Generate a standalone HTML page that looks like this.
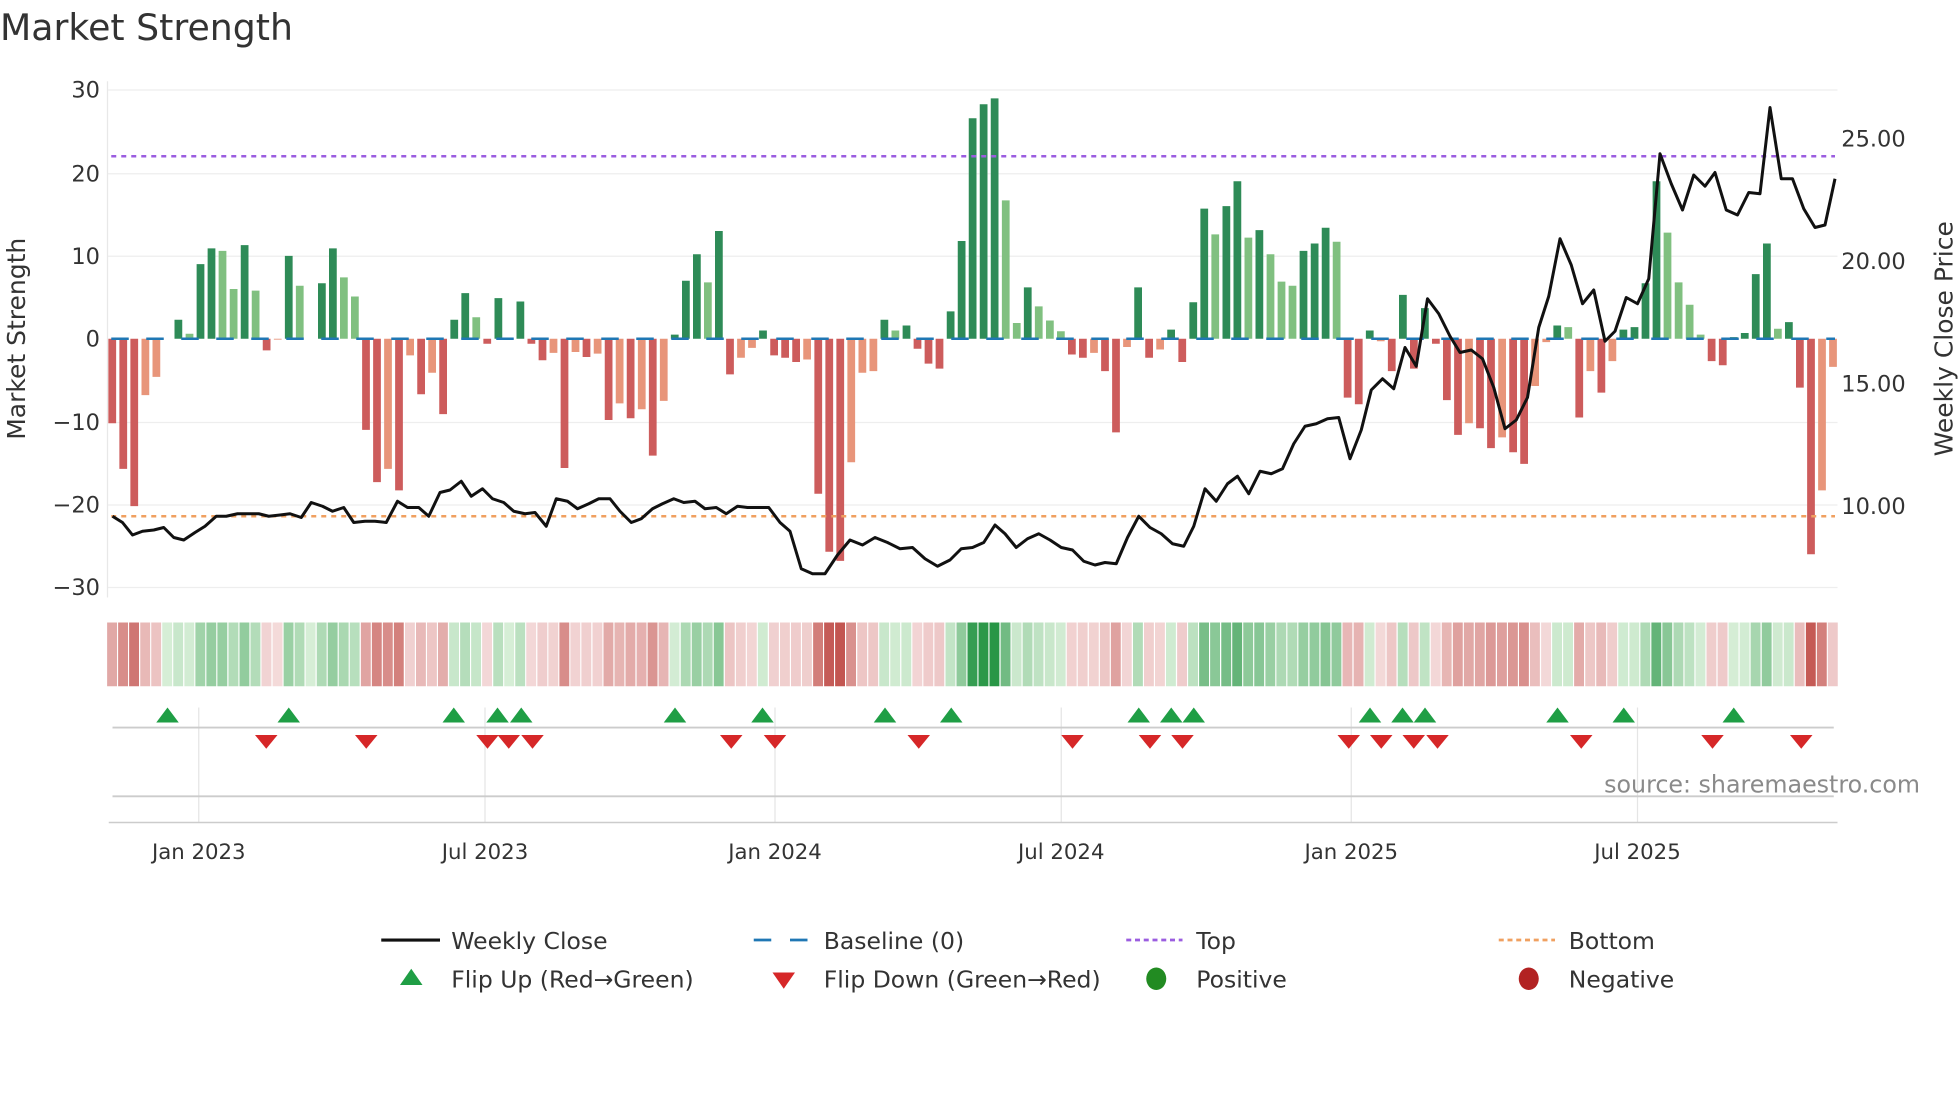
<!DOCTYPE html>
<html><head><meta charset="utf-8"><style>
html,body{margin:0;padding:0;background:#fff;width:1960px;height:1102px;overflow:hidden}
svg{display:block}
text{font-family:"DejaVu Sans","Liberation Sans",sans-serif;fill:#333}
</style></head><body>
<svg id="s" width="1960" height="1102" viewBox="0 0 1568 881.6" xmlns="http://www.w3.org/2000/svg">
<text x="0" y="32" font-size="29" fill="#333">Market Strength</text>
<g stroke="#eeeeee" stroke-width="1">
<line x1="86" y1="72" x2="1470" y2="72"/><line x1="86" y1="139" x2="1470" y2="139"/><line x1="86" y1="205" x2="1470" y2="205"/><line x1="86" y1="338" x2="1470" y2="338"/><line x1="86" y1="404" x2="1470" y2="404"/><line x1="86" y1="470" x2="1470" y2="470"/>
</g>
<line x1="86" y1="65" x2="86" y2="478" stroke="#e8e8e8"/>
<g font-size="18" text-anchor="end">
<text x="80" y="78">30</text><text x="80" y="145">20</text><text x="80" y="211">10</text><text x="80" y="277">0</text><text x="80" y="344">−10</text><text x="80" y="410">−20</text><text x="80" y="476">−30</text>
</g>
<g font-size="18">
<text x="1473" y="117">25.00</text><text x="1473" y="215">20.00</text><text x="1473" y="313">15.00</text><text x="1473" y="411">10.00</text>
</g>
<text transform="translate(20,271) rotate(-90)" font-size="20" text-anchor="middle">Market Strength</text>
<text transform="translate(1562,271) rotate(-90)" font-size="20" text-anchor="middle">Weekly Close Price</text>
<g id="bars"></g>
<line x1="89" y1="271" x2="1468" y2="271" stroke="#1f77b4" stroke-width="2" stroke-dasharray="14,14"/>
<line x1="89" y1="125" x2="1468" y2="125" stroke="#9b5de0" stroke-width="2" stroke-dasharray="4,4"/>
<line x1="89" y1="413" x2="1468" y2="413" stroke="#f0a060" stroke-width="2" stroke-dasharray="4,4"/>
<polyline id="price" fill="none" stroke="#111" stroke-width="2.4" stroke-linejoin="round"/>
<g id="heat"></g>
<g stroke="#e5e5e5"><line x1="159" y1="566" x2="159" y2="658"/><line x1="388" y1="566" x2="388" y2="658"/><line x1="620" y1="566" x2="620" y2="658"/><line x1="849" y1="566" x2="849" y2="658"/><line x1="1081" y1="566" x2="1081" y2="658"/><line x1="1310" y1="566" x2="1310" y2="658"/></g>
<line x1="90" y1="582" x2="1467" y2="582" stroke="#cccccc" stroke-width="1.5"/>
<line x1="90" y1="637" x2="1467" y2="637" stroke="#cccccc" stroke-width="1.5"/>
<line x1="87" y1="658" x2="1470" y2="658" stroke="#cccccc" stroke-width="1.2"/>
<g id="marks"></g>
<text x="1536" y="634" font-size="19" text-anchor="end" fill="#8a8a8a" style="fill:#8a8a8a">source: sharemaestro.com</text>
<g font-size="17" text-anchor="middle">
<text x="159" y="687">Jan 2023</text><text x="388" y="687">Jul 2023</text><text x="620" y="687">Jan 2024</text><text x="849" y="687">Jul 2024</text><text x="1081" y="687">Jan 2025</text><text x="1310" y="687">Jul 2025</text>
</g>
<g font-size="18.8">
<line x1="305" y1="752" x2="352" y2="752" stroke="#111" stroke-width="2.5"/><text x="361" y="759">Weekly Close</text>
<line x1="603" y1="752" x2="617" y2="752" stroke="#1f77b4" stroke-width="2.2"/><line x1="632" y1="752" x2="646" y2="752" stroke="#1f77b4" stroke-width="2.2"/><text x="659" y="759">Baseline (0)</text>
<line x1="901" y1="752" x2="946" y2="752" stroke="#9b5de0" stroke-width="2.2" stroke-dasharray="4,3"/><text x="957" y="759">Top</text>
<line x1="1199" y1="752" x2="1244" y2="752" stroke="#f0a060" stroke-width="2.2" stroke-dasharray="4,3"/><text x="1255" y="759">Bottom</text>
<polygon points="320,788 338,788 329,775" fill="#1f9e45"/><text x="361" y="790">Flip Up (Red→Green)</text>
<polygon points="618,778 636,778 627,791" fill="#d62728"/><text x="659" y="790">Flip Down (Green→Red)</text>
<ellipse cx="925" cy="783" rx="8" ry="9" fill="#228b22"/><text x="957" y="790">Positive</text>
<ellipse cx="1223" cy="783" rx="8" ry="9" fill="#b22222"/><text x="1255" y="790">Negative</text>
</g>
</svg>
<script>
var d="-10.2R,-15.7R,-20.2R,-6.8r,-4.6r,0G,2.3G,0.6g,9G,10.9G,10.6g,6g,11.3G,5.8g,-1.4R,-0.1r,10G,6.4g,0G,6.7G,10.9G,7.4g,5.1g,-11R,-17.3R,-15.7r,-18.3R,-2r,-6.7R,-4.1r,-9.1R,2.3G,5.5G,2.6g,-0.6R,4.9G,0G,4.5G,-0.6R,-2.6R,-1.7r,-15.6R,-1.6r,-2.2R,-1.8r,-9.8R,-7.8r,-9.6R,-8.5r,-14.1R,-7.5r,0.5G,7G,10.2G,6.8g,13G,-4.3R,-2.3r,-1.1r,1G,-2R,-2.3R,-2.8R,-2.5r,-18.7R,-25.7R,-26.8R,-14.9r,-4.1r,-3.9r,2.3G,1g,1.6G,-1.2R,-3R,-3.6R,3.3G,11.8G,26.6G,28.3G,29G,16.7g,1.9g,6.2G,3.9g,2.2g,0.9g,-1.9R,-2.3R,-1.7r,-3.9R,-11.3R,-1r,6.2G,-2.3R,-1.3r,1.1G,-2.8R,4.4G,15.7G,12.6g,16G,19G,12.2g,13.1G,10.2g,6.9g,6.4g,10.6G,11.5G,13.4G,11.7g,-7.1R,-7.9R,1G,-0.3r,-3.9R,5.3G,-3.6R,3.7G,-0.6R,-7.4R,-11.6R,-10.2r,-10.8R,-13.2R,-11.9r,-13.7R,-15.1R,-5.7r,-0.4r,1.6G,1.4g,-9.5R,-3.9r,-6.5R,-2.7r,1.1G,1.4G,6.7G,19G,12.8g,6.8g,4.1g,0.5g,-2.7R,-3.2R,0.2G,0.7G,7.8G,11.5G,1.2g,2G,-5.9R,-26R,-18.3r,-3.4r".split(",");
var cols={R:"#cd5c5c",r:"#e8957a",G:"#2e8b57",g:"#80c080"};
var N=d.length,x0=89.8,x1=1466.4,p=(x1-x0)/(N-1),bh="",hh="";
function mix(a,b,t){var r=[];for(var i=0;i<3;i++)r.push(Math.round(a[i]+(b[i]-a[i])*t));return "rgb("+r.join(",")+")";}
for(var i=0;i<N;i++){var s=d[i],v=parseFloat(s),c=s.slice(-1),x=x0+i*p;
 if(v!==0){var y=271-v*6.63;bh+='<rect x="'+(x-3.1).toFixed(1)+'" y="'+Math.min(y,271).toFixed(1)+'" width="6.2" height="'+Math.abs(271-y).toFixed(1)+'" fill="'+cols[c]+'"/>';}
 var col=v>=0?mix([214,238,214],[40,150,70],Math.min(v/29,1)):mix([244,218,218],[195,85,80],Math.min(-v/27,1));
 hh+='<rect x="'+(x-4.1).toFixed(1)+'" y="498" width="'+(p-0.9).toFixed(1)+'" height="51" fill="'+col+'"/>';}
document.getElementById("bars").innerHTML=bh;document.getElementById("heat").innerHTML=hh;
var pts="90,413 98,418 106,428 114,425 123,424 131,422 139,430 147,432 156,426 164,421 173,413 181,413 190,411 198,411 207,411 215,413 224,412 232,411 241,414 249,402 258,405 266,409 275,406 283,418 292,417 300,417 309,418 318,401 326,406 335,406 343,413 352,394 360,392 369,385 377,397 386,391 394,399 403,402 411,409 420,411 428,410 437,421 445,399 454,401 462,407 471,403 479,399 488,399 496,409 505,418 513,415 522,407 530,403 539,399 547,402 556,401 564,407 573,406 581,411 590,405 598,406 607,406 615,406 624,418 632,425 641,455 650,459 660,459 670,444 680,432 690,436 700,430 710,434 720,439 730,438 740,447 750,453 760,448 769,439 778,438 787,434 796,420 804,427 813,438 822,431 831,427 840,432 849,438 858,440 867,449 876,452 884,450 893,451 902,430 911,413 920,422 929,427 938,435 947,437 955,421 964,391 973,401 982,387 990,381 999,395 1008,377 1017,379 1026,375 1035,355 1044,341 1053,339 1062,335 1071,334 1080,367 1089,344 1097,312 1106,303 1115,311 1124,278 1133,293 1142,239 1151,251 1160,269 1168,282 1177,280 1186,287 1195,310 1204,343 1213,336 1222,318 1231,262 1239,237 1248,191 1257,212 1266,243 1275,232 1284,273 1292,265 1301,238 1310,243 1319,223 1328,123 1337,147 1346,168 1355,140 1364,149 1372,138 1381,168 1390,172 1399,154 1408,155 1416,86 1425,143 1434,143 1443,167 1452,182 1460,180 1468,143";
document.getElementById("price").setAttribute("points",pts);
var up=[134,231,363,398,417,540,610,708,761,911,937,955,1096,1122,1140,1246,1299,1387],dn=[213,293,390,407,426,585,620,735,858,920,946,1079,1105,1131,1150,1265,1370,1441],m="";
up.forEach(function(x){m+='<polygon points="'+(x-9)+',578 '+(x+9)+',578 '+x+',566" fill="#1f9e45"/>';});
dn.forEach(function(x){m+='<polygon points="'+(x-9)+',588 '+(x+9)+',588 '+x+',599" fill="#d62728"/>';});
document.getElementById("marks").innerHTML=m;
</script>
</body></html>
